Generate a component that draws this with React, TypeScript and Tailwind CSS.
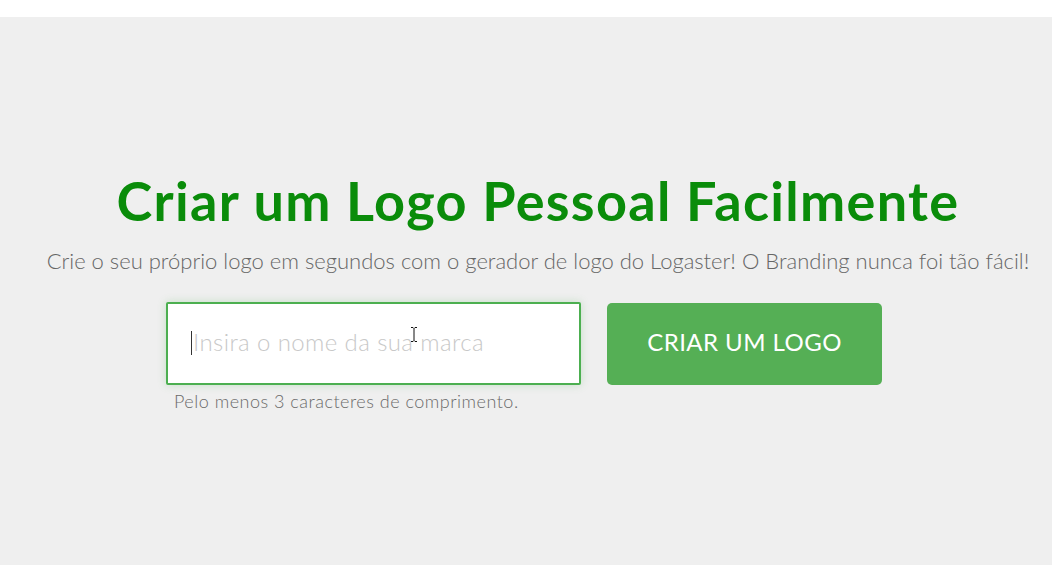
export default function App() {
  return (
    <div className="w-[1052px] h-[578px] bg-white font-['Lato',sans-serif] flex flex-col">
      <div className="h-[17px] bg-white" />
      <div className="h-[548px] bg-[#efefef] flex flex-col items-center pt-[154px]">
        <h1 className="ml-[24px] text-[54px] leading-[60px] font-bold text-[#0a8c0a] tracking-[1.3px]">
          Criar um Logo Pessoal Facilmente
        </h1>
        <p className="ml-[24px] mt-[17px] text-[22px] leading-[26px] font-light text-[#666]">
          Crie o seu próprio logo em segundos com o gerador de logo do Logaster! O Branding nunca foi tão fácil!
        </p>
        <div className="mt-[28px] flex gap-[26px] ml-[-4px]">
          <div className="flex flex-col">
            <div className="relative w-[415px] h-[83px] bg-white border-2 border-[#4caf50] rounded-[2px] shadow-[0_0_8px_rgba(76,175,80,0.25)] flex items-center pl-[23px] pb-[4px]">
              <span className="w-px h-[24px] mt-[3px] mr-[1px] bg-[#333]" />
              <span className="text-[24px] font-light tracking-[0.4px] text-[#c8c8c8]">
                Insira o nome da sua marca
              </span>
              <svg className="absolute left-[242px] top-[22px]" width="8" height="17" viewBox="0 0 8 17">
                <path d="M1 1.5h2l1 1 1-1h2M4 2.5v12M1 15.5h2l1-1 1 1h2" stroke="#111" strokeWidth="1" fill="none" />
              </svg>
            </div>
            <span className="mt-[5px] ml-[8px] text-[18px] leading-[22px] font-light tracking-[0.5px] text-[#6a6a6a]">
              Pelo menos 3 caracteres de comprimento.
            </span>
          </div>
          <button className="w-[275px] h-[82px] mt-[1px] pb-[4px] bg-[#55af55] rounded-[5px] text-white text-[24px] font-normal tracking-[0.45px]">
            CRIAR UM LOGO
          </button>
        </div>
      </div>
      <div className="flex-1 bg-white" />
    </div>
  )
}
